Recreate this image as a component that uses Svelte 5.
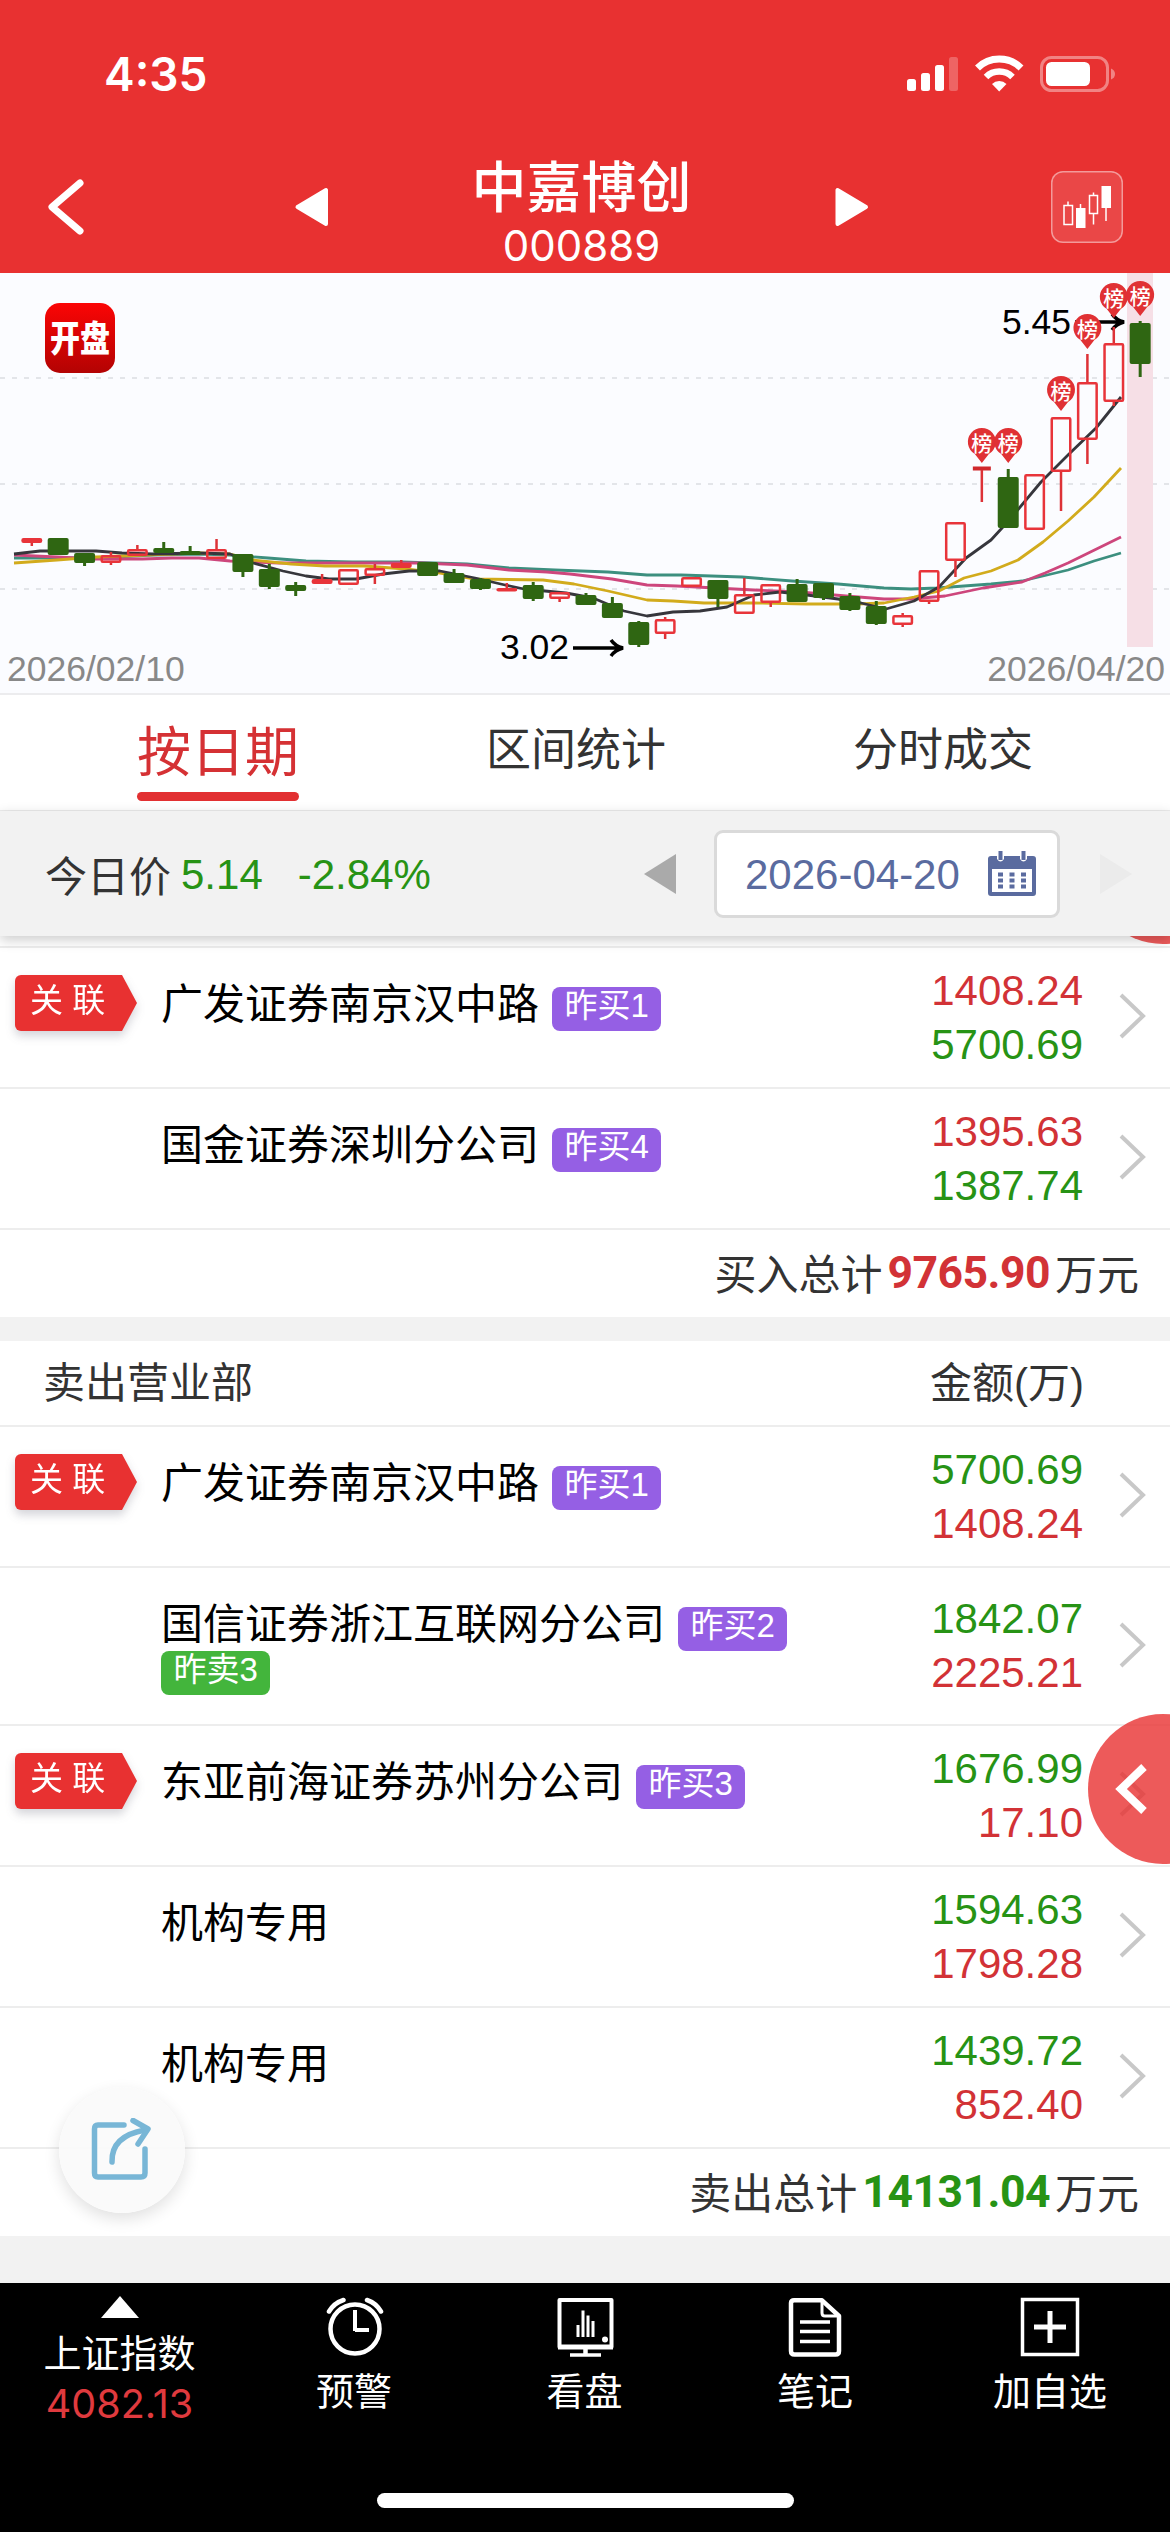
<script lang="ts">
  type Kind = 'up' | 'down' | 'flat'
  type Candle = [Kind, number, number, number, number] // kind, high, body top, body bottom, low

  interface Seat {
    name: string
    linked?: boolean
    tags: { text: string; sell?: boolean }[]
    amounts: { value: string; dir: 'up' | 'down' }[]
  }

  const STEP = 26.39
  const FIRST_X = 31.8
  const BODY_W = 21

  const candles: Candle[] = [
    ['up', 265, 265, 270, 273], ['down', 265, 265, 282, 282], ['down', 280, 280, 290, 293],
    ['up', 279, 282, 290, 292], ['up', 272, 276, 283, 283], ['down', 269, 275, 280, 280],
    ['down', 273, 278, 282, 282], ['up', 266, 276, 286, 286], ['down', 281, 281, 299, 304],
    ['down', 291, 296, 314, 316], ['down', 309, 312, 318, 323], ['up', 301, 306, 311, 311],
    ['up', 296, 296, 312, 312], ['up', 291, 295, 303, 311], ['up', 287, 290, 295, 295],
    ['down', 289, 289, 303, 303], ['down', 296, 300, 310, 310], ['down', 305, 306, 316, 317],
    ['up', 310, 315, 318, 318], ['down', 309, 312, 326, 328], ['up', 319, 319, 326, 329],
    ['down', 320, 322, 332, 332], ['down', 324, 330, 345, 345], ['down', 348, 349, 372, 374],
    ['up', 344, 346, 361, 366], ['up', 304, 304, 314, 314], ['down', 307, 307, 326, 334],
    ['up', 305, 321, 341, 341], ['up', 311, 311, 330, 334], ['down', 306, 311, 329, 329],
    ['down', 310, 310, 325, 327], ['down', 320, 323, 337, 338], ['down', 328, 333, 351, 352],
    ['up', 340, 342, 352, 354], ['up', 297, 297, 329, 331], ['up', 249, 249, 288, 304],
    ['flat', 194, 194, 197, 229], ['down', 196, 204, 255, 255], ['up', 201, 201, 257, 257],
    ['up', 144, 144, 199, 238], ['up', 81, 109, 167, 191], ['up', 54, 70, 129, 133],
    ['down', 48, 50, 91, 104],
  ]

  const averages = [
    { color: '#3c8f7f', points: '14,285 96,285 153,282 199,281 230,282 268,285 306,288 352,289 402,289 467,291 509,295 555,297 608,299 647,302 681,302 742,304 792,308 838,311 884,315 911,316 937,315 991,311 1022,308 1068,297 1094,288 1121,280' },
    { color: '#cd467c', points: '14,282 57,284 96,286 142,286 172,285 199,285 230,288 279,290 329,290 421,290 467,292 509,297 547,299 570,301 612,306 647,312 677,313 754,317 800,319 846,323 884,326 911,326 945,323 983,315 1022,309 1045,300 1068,290 1121,264' },
    { color: '#d2ab1c', points: '14,290 57,287 96,284 145,282 199,280 230,281 253,287 291,291 325,293 364,293 406,296 440,300 475,306 543,307 574,311 608,318 647,327 673,328 704,330 754,330 807,331 857,331 884,330 914,324 939,318 964,305 991,298 1018,287 1043,269 1068,248 1094,224 1121,195' },
    { color: '#36363c', points: '14,281 40,278 96,278 122,280 153,281 199,280 230,281 253,290 283,298 306,303 329,306 356,306 383,301 409,298 440,298 475,305 505,312 524,316 566,320 593,325 624,338 647,343 673,339 700,338 727,334 754,322 780,319 807,322 838,326 861,330 886,336 914,328 939,314 966,285 991,267 1002,255 1016,239 1041,209 1068,182 1096,155 1121,124' },
  ]

  // candle index + top of the pin
  const pins = [[36, 156], [37, 156], [39, 104], [40, 42], [41, 11], [42, 9]]

  const buySeats: Seat[] = [
    { name: '广发证券南京汉中路', linked: true, tags: [{ text: '昨买1' }],
      amounts: [{ value: '1408.24', dir: 'up' }, { value: '5700.69', dir: 'down' }] },
    { name: '国金证券深圳分公司', tags: [{ text: '昨买4' }],
      amounts: [{ value: '1395.63', dir: 'up' }, { value: '1387.74', dir: 'down' }] },
  ]

  const sellSeats: Seat[] = [
    { name: '广发证券南京汉中路', linked: true, tags: [{ text: '昨买1' }],
      amounts: [{ value: '5700.69', dir: 'down' }, { value: '1408.24', dir: 'up' }] },
    { name: '国信证券浙江互联网分公司', tags: [{ text: '昨买2' }, { text: '昨卖3', sell: true }],
      amounts: [{ value: '1842.07', dir: 'down' }, { value: '2225.21', dir: 'up' }] },
    { name: '东亚前海证券苏州分公司', linked: true, tags: [{ text: '昨买3' }],
      amounts: [{ value: '1676.99', dir: 'down' }, { value: '17.10', dir: 'up' }] },
    { name: '机构专用', tags: [],
      amounts: [{ value: '1594.63', dir: 'down' }, { value: '1798.28', dir: 'up' }] },
    { name: '机构专用', tags: [],
      amounts: [{ value: '1439.72', dir: 'down' }, { value: '852.40', dir: 'up' }] },
  ]

  const tabs = ['按日期', '区间统计', '分时成交']
  let activeTab = $state(0)

  const cx = (i: number) => FIRST_X + STEP * i
</script>

{#snippet seatRow(seat: Seat)}
  <div class="seat">
    <div class="seat-flag">
      {#if seat.linked}<div class="linked"><span>关 联</span></div>{/if}
    </div>
    <div class="seat-name">
      <span class="name">{seat.name}</span>
      {#each seat.tags as tag}
        <span class="tag" class:sell={tag.sell}>{tag.text}</span>
      {/each}
    </div>
    <div class="amounts">
      {#each seat.amounts as a}<span class={a.dir}>{a.value}</span>{/each}
    </div>
    <svg class="more" width="30" height="48" viewBox="0 0 30 48">
      <path d="M3 3 L25 24 L3 45" fill="none" stroke="#c8c8c8" stroke-width="4" />
    </svg>
  </div>
{/snippet}

<div class="screen">
  <header>
    <div class="statusbar">
      <span class="time">4:35</span>
      <svg width="210" height="40" viewBox="906 54 210 40" fill="#fff">
        <rect x="907" y="79" width="9" height="12" rx="2.5" />
        <rect x="921" y="73" width="9" height="18" rx="2.5" />
        <rect x="935" y="65" width="9" height="26" rx="2.5" />
        <rect x="949" y="57" width="9" height="34" rx="2.5" opacity=".25" />
        <path d="M977.500 68 A31 31 0 0 1 1021 68" fill="none" stroke="#fff" stroke-width="7" />
        <path d="M986 77 A19 19 0 0 1 1012.500 77" fill="none" stroke="#fff" stroke-width="6.500" />
        <path d="M999.200 91.500 L992 84 A10.500 10.500 0 0 1 1006.500 84 Z" />
        <rect x="1041.500" y="57.500" width="66" height="33" rx="10" fill="none" stroke="#fff" stroke-width="3" opacity=".4" />
        <rect x="1046" y="62" width="44" height="24" rx="5.500" />
        <path d="M1111 68.500 Q1115 70 1115 74 Q1115 78 1111 79.500 Z" opacity=".4" />
      </svg>
    </div>
    <div class="nav">
      <svg class="back" width="46" height="62" viewBox="0 0 46 62">
        <path d="M36 7 L8 31 L36 55" fill="none" stroke="#fff" stroke-width="7" stroke-linecap="round" stroke-linejoin="round" />
      </svg>
      <svg width="34" height="40" viewBox="0 0 34 40"><path d="M32 3 V37 L3.500 20 Z" fill="#fff" stroke="#fff" stroke-width="4" stroke-linejoin="round" /></svg>
      <div class="title">
        <h1>中嘉博创</h1>
        <span>000889</span>
      </div>
      <svg width="34" height="40" viewBox="0 0 34 40"><path d="M2.500 3 V37 L31 20 Z" fill="#fff" stroke="#fff" stroke-width="4" stroke-linejoin="round" /></svg>
      <button class="kline" aria-label="K线">
        <svg width="72" height="72" viewBox="0 0 72 72">
          <g fill="none" stroke="#fff" stroke-width="1.500">
            <rect x="13" y="34.500" width="8.500" height="19" />
            <path d="M17 30.500 V34 M29.500 33 V37" />
            <rect x="38.500" y="24.500" width="8" height="18" />
            <path d="M42.500 21.500 V24 M42.500 43 V53.500 M55 36 V50" />
          </g>
          <rect x="25" y="37" width="9.500" height="20" fill="#fff" />
          <rect x="50.500" y="15" width="9.500" height="22" fill="#fff" />
        </svg>
      </button>
    </div>
  </header>

  <svg class="chart" width="1170" height="422" viewBox="0 0 1170 422">
    <defs>
      <linearGradient id="logo" x1="0" y1="0" x2="0" y2="1">
        <stop offset="0" stop-color="#fb0505" />
        <stop offset="1" stop-color="#b30303" />
      </linearGradient>
    </defs>
    {#each [105, 211, 316] as y}
      <line x1="0" x2="1170" y1={y} y2={y} stroke="#dcdde2" stroke-width="1.500" stroke-dasharray="5 7" />
    {/each}
    <line x1="0" x2="1170" y1="421" y2="421" stroke="#ececee" stroke-width="2" />
    <rect x="1127" y="0" width="26" height="374" fill="#f6dfe6" />

    <rect x="45" y="30" width="70" height="70" rx="15" fill="url(#logo)" />
    <text class="logo-text" transform="translate(80 78.500) scale(1 1.22)" text-anchor="middle">开盘</text>

    {#each averages as ma}
      <polyline points={ma.points} fill="none" stroke={ma.color} stroke-width="2.800" stroke-linejoin="round" />
    {/each}

    <g stroke="#000" stroke-width="3.500" fill="none">
      <path d="M1075 49 H1122 M1112 41 Q1116 47 1124 49 Q1116 51 1112 57" />
      <path d="M573 375 H621 M611 367 Q615 373 623 375 Q615 377 611 383" />
    </g>

    {#each candles as [kind, high, top, bottom, low], i}
      {@const x = cx(i)}
      {#if kind === 'down'}
        <line x1={x} x2={x} y1={high} y2={low} stroke="#2f6612" stroke-width="3" />
        <rect x={x - BODY_W / 2} y={top} width={BODY_W} height={bottom - top} rx="2" fill="#2f6612" />
      {:else if kind === 'flat'}
        <rect x={x - 9} y={top - 0.5} width="18" height="4" fill="#d0282c" />
        <line x1={x} x2={x} y1={bottom} y2={low} stroke="#dd3237" stroke-width="2.500" />
      {:else}
        <path d="M{x} {high} V{top} M{x} {bottom} V{low}" stroke="#dd3237" stroke-width="2.500" />
        <rect
          x={x - BODY_W / 2 + 1.25} y={top + 1.25}
          width={BODY_W - 2.5} height={Math.max(bottom - top - 2.5, 1)}
          rx="1" fill={bottom - top < 6 ? '#e8343a' : 'none'} stroke="#e8343a" stroke-width="2.500"
        />
      {/if}
    {/each}

    {#each pins as [i, top]}
      <g transform="translate({cx(i)} {top})">
        <path d="M0 34 L-7 25 A14 14 0 1 1 7 25 Z" fill="#e03134" />
        <text class="pin-text" x="0" y="21.500" text-anchor="middle">榜</text>
      </g>
    {/each}

    <text class="price" x="1002" y="61">5.45</text>
    <text class="price" x="500" y="386">3.02</text>
    <text class="date" x="7" y="408">2026/02/10</text>
    <text class="date" x="1165" y="408" text-anchor="end">2026/04/20</text>
  </svg>

  <nav class="tabs">
    {#each tabs as tab, i}
      <button class:active={i === activeTab} onclick={() => (activeTab = i)}>{tab}</button>
    {/each}
  </nav>

  <div class="datebar">
    <span class="label">今日价</span>
    <span class="down">5.14</span>
    <span class="down change">-2.84%</span>
    <svg class="prev" width="32" height="40" viewBox="0 0 32 40"><path d="M32 0 V40 L0 20 Z" fill="#aaa" /></svg>
    <button class="datepick">
      <span>2026-04-20</span>
      <svg width="50" height="48" viewBox="0 0 50 48">
        <path d="M4 6 H10 V9 Q13.500 14 17 9 V6 H33 V9 Q36.500 14 40 9 V6 H46 Q49 6 49 9 V43 Q49 46 46 46 H4 Q1 46 1 43 V9 Q1 6 4 6 Z" fill="#5a6b9f" />
        <path d="M13.500 1 V10 M36.500 1 V10" stroke="#5a6b9f" stroke-width="4" />
        <rect x="5" y="19" width="40" height="23" fill="#fff" />
        <path d="M11 24.500 H39 M11 30.500 H39 M11 36.500 H39" stroke="#5a6b9f" stroke-width="4" stroke-dasharray="5 6.500" />
      </svg>
    </button>
    <svg width="32" height="40" viewBox="0 0 32 40"><path d="M0 0 V40 L32 20 Z" fill="#ebebeb" /></svg>
  </div>

  <main>
    <section class="seats first">
      {#each buySeats as seat}{@render seatRow(seat)}{/each}
      <div class="total">
        <span>买入总计</span><b class="up">9765.90</b><span>万元</span>
      </div>
    </section>

    <section class="seats">
      <div class="seats-head"><span>卖出营业部</span><span>金额(万)</span></div>
      {#each sellSeats as seat}{@render seatRow(seat)}{/each}
      <div class="total">
        <span>卖出总计</span><b class="down">14131.04</b><span>万元</span>
      </div>
    </section>
  </main>

  <div class="drawer hidden-one"></div>
  <button class="drawer" aria-label="展开">
    <svg width="34" height="50" viewBox="0 0 34 50">
      <path d="M29 3 L6 25 L29 47" fill="none" stroke="#fff" stroke-width="8" />
    </svg>
  </button>

  <button class="share" aria-label="分享">
    <svg width="62" height="64" viewBox="0 0 62 64" fill="none" stroke="#78b6d6" stroke-width="5.500" stroke-linecap="round">
      <path d="M33 7 H7 Q3.500 7 3.500 11 V55 Q3.500 59 7 59 H50 Q54 59 54 55 V31" />
      <path d="M21 44 Q20 18 54 12" />
      <path d="M42 2.500 L57 11 L47 26" stroke-linejoin="round" />
    </svg>
  </button>

  <footer>
    <div class="menu">
      <div class="item index">
        <svg width="38" height="22" viewBox="0 0 38 22"><path d="M19 0 L38 22 H0 Z" fill="#fff" /></svg>
        <span>上证指数</span>
        <span class="points">4082.13</span>
      </div>
      <div class="item">
        <svg width="60" height="60" viewBox="0 0 60 60" fill="none" stroke="#fff" stroke-width="4.500">
          <circle cx="31" cy="32" r="24.500" />
          <path d="M31 13 V34 M31 33 H45" stroke-width="4" />
          <path d="M5 14.500 Q10 6 19.500 3 M57 14.500 Q52 6 43 3" stroke-linecap="round" />
        </svg>
        <span>预警</span>
      </div>
      <div class="item">
        <svg width="60" height="60" viewBox="0 0 60 60" fill="none" stroke="#fff" stroke-width="4">
          <path d="M4.500 3 H56.500 V50 H4.500 Z" stroke-linejoin="round" />
          <path d="M3 50 H58" stroke-width="5" />
          <path d="M30.500 51 V58" stroke-width="4.500" />
          <path d="M15 58 H46" stroke-width="3.500" />
          <path d="M23 40 V28 M28 40 V13.500 M33 40 V18.500 M38 40 V24" stroke-width="3" />
          <circle cx="50" cy="42.500" r="3" fill="#fff" stroke="none" />
        </svg>
        <span>看盘</span>
      </div>
      <div class="item">
        <svg width="60" height="60" viewBox="0 0 60 60" fill="none" stroke="#fff" stroke-width="4.500" stroke-linejoin="round">
          <path d="M9 3.300 H37 L54 19 V54 Q54 57.500 50.500 57.500 H9.500 Q6 57.500 6 54 V6 Q6 3.300 9 3.300 Z" />
          <path d="M37 4 V16 Q37 19 40 19 H54" stroke-width="3" />
          <path d="M15 25 H45 M15 34.500 H45 M15 44.500 H45" stroke-width="3.500" />
        </svg>
        <span>笔记</span>
      </div>
      <div class="item">
        <svg width="60" height="60" viewBox="0 0 60 60" fill="none" stroke="#fff" stroke-width="3.500">
          <rect x="2.500" y="2.500" width="55" height="55" />
          <path d="M30 14 V46 M14 30 H46" stroke-width="5" />
        </svg>
        <span>加自选</span>
      </div>
    </div>
    <div class="home"></div>
  </footer>
</div>

<style>
  :global(body) {
    background: #f2f2f2;
  }
  .screen {
    position: relative;
    display: flex;
    flex-direction: column;
    width: 1170px;
    height: 2532px;
    overflow: hidden;
    background: #f2f2f2;
    color: #333;
    font-family: "Liberation Sans", "Noto Sans CJK SC", sans-serif;
    font-size: 42px;
  }
  svg { display: block; flex: none; }
  button {
    border: none;
    padding: 0;
    background: none;
    font: inherit;
    color: inherit;
  }
  .up   { color: #d23236; }
  .down { color: #279315; }

  /* header */
  header {
    flex: none;
    height: 273px;
    background: #e83131;
    color: #fff;
  }
  .statusbar {
    display: flex;
    justify-content: space-between;
    align-items: center;
    height: 148px;
    padding: 0 54px 0 104px;
    box-sizing: border-box;
  }
  .time {
    font-family: Inter, sans-serif;
    font-weight: 600;
    font-size: 46px;
    line-height: 48px;
  }
  .nav {
    display: grid;
    grid-template-columns: 250px 34px 507px 34px 182px 72px;
    grid-template-rows: 118px;
    align-items: center;
    padding-left: 44px;
  }
  .title {
    display: flex;
    flex-direction: column;
    align-items: center;
    padding-top: 7px;
  }
  .title h1 {
    margin: 0;
    font-size: 55px;
    font-weight: 500;
    line-height: 70px;
  }
  .title span {
    font-family: Inter, sans-serif;
    font-size: 42px;
    line-height: 45px;
  }
  .kline {
    grid-column: 6;
    width: 72px;
    height: 72px;
    border-radius: 12px;
    background: rgba(255, 255, 255, 0.11);
    box-shadow: inset 0 0 0 1.5px rgba(255, 255, 255, 0.45);
  }

  /* chart */
  .chart { background: #fbfcff; }
  .logo-text { font-size: 30px; font-weight: 900; fill: #fff; }
  .pin-text  { font-size: 21px; font-weight: 500; fill: #fff; }
  .price     { font-size: 35.5px; fill: #000; }
  .date      { font-size: 35.5px; fill: #888; }

  /* tabs */
  .tabs {
    flex: none;
    z-index: 2;
    display: flex;
    justify-content: space-between;
    align-items: flex-start;
    height: 116px;
    padding: 0 137px;
    box-sizing: border-box;
    background: #fff;
    border-bottom: 1px solid #ececec;
  }
  .tabs button {
    height: 106px;
    font-size: 45px;
    line-height: 112px;
  }
  .tabs .active {
    display: flex;
    flex-direction: column;
    box-sizing: border-box;
    padding-top: 10px;
    font-size: 54px;
    line-height: 97px;
    color: #d53134;
  }
  .tabs .active::after {
    content: '';
    flex: none;
    height: 9px;
    margin-top: -10px;
    border-radius: 5px;
    background: #e23032;
  }

  /* date bar */
  .datebar {
    flex: none;
    z-index: 2;
    display: flex;
    align-items: center;
    height: 125px;
    padding-left: 45px;
    box-sizing: border-box;
    background: #f2f2f2;
    box-shadow: 0 4px 12px rgba(0, 0, 0, 0.2);
  }
  .datebar span { padding-top: 2px; }
  .datebar .label {
    margin-right: 10px;
    padding-top: 0;
  }
  .change { margin-left: 35px; }
  .prev   { margin-left: auto; }
  .datepick {
    display: flex;
    align-items: center;
    justify-content: space-between;
    width: 346px;
    height: 88px;
    margin: 0 40px 0 38px;
    padding: 0 20px 0 28px;
    box-sizing: border-box;
    border: 3px solid #dadada;
    border-radius: 9px;
    background: #fff;
    color: #5a6b9f;
  }
  .datebar > svg:last-child { margin-right: 38px; }

  /* seats */
  .seats {
    margin-bottom: 24px;
    background: #fff;
  }
  .first {
    margin-top: 10px;
    border-top: 2px solid #ededed;
    box-shadow: 0 -10px #fff;
  }
  .seats-head {
    display: flex;
    justify-content: space-between;
    align-items: center;
    height: 86px;
    padding: 0 86px 7px 43px;
    box-sizing: border-box;
    border-bottom: 2px solid #ededed;
  }
  .seat {
    display: flex;
    min-height: 141px;
    box-sizing: border-box;
    border-bottom: 2px solid #ededed;
  }
  .seat-flag {
    flex: none;
    width: 161px;
    padding: 27px 0 0 15px;
    box-sizing: border-box;
    filter: drop-shadow(0 5px 5px rgba(60, 60, 80, 0.22));
  }
  .linked {
    width: 122px;
    height: 56px;
    padding-left: 15px;
    box-sizing: border-box;
    border-radius: 6px 0 0 6px;
    background: #e83131;
    clip-path: polygon(0 0, 107px 0, 100% 50%, 107px 100%, 0 100%);
    color: #fff;
    font-size: 33px;
    line-height: 52px;
    white-space: pre;
  }
  .seat-name {
    flex: none;
    display: flex;
    flex-wrap: wrap;
    align-content: flex-start;
    align-items: flex-start;
    column-gap: 13px;
    width: 680px;
    padding: 39px 0 29px;
    color: #000;
  }
  .name {
    margin-top: -4px;
    line-height: 44px;
  }
  .tag {
    height: 44px;
    padding: 0 12.5px;
    border-radius: 8px;
    background: #955fe4;
    color: #fff;
    font-size: 33px;
    line-height: 37px;
  }
  .sell { background: #43b53c; }
  .amounts {
    display: flex;
    flex-direction: column;
    justify-content: center;
    align-items: flex-end;
    width: 242px;
    line-height: 54px;
  }
  .more {
    align-self: center;
    margin: 0 0 3px 35px;
  }
  .total {
    display: flex;
    justify-content: flex-end;
    align-items: center;
    height: 87px;
    padding: 0 31px 4px 0;
    box-sizing: border-box;
  }
  .total b {
    margin: 3px 5px 0;
    font-family: Roboto, sans-serif;
    font-size: 44.5px;
    line-height: 50px;
    letter-spacing: -0.5px;
  }

  /* floating controls */
  .drawer {
    position: absolute;
    z-index: 1;
    left: 1088px;
    top: 1714px;
    display: flex;
    align-items: center;
    width: 150px;
    height: 150px;
    padding-left: 27px;
    box-sizing: border-box;
    border-radius: 50%;
    background: rgba(232, 49, 49, 0.8);
  }
  .hidden-one { top: 794px; }
  .share {
    position: absolute;
    left: 59px;
    top: 2087px;
    display: grid;
    place-items: center;
    width: 126px;
    height: 126px;
    border-radius: 50%;
    background: rgba(250, 250, 250, 0.95);
    box-shadow: 0 6px 16px rgba(0, 0, 0, 0.12);
  }

  /* bottom bar */
  footer {
    display: flex;
    flex-direction: column;
    justify-content: space-between;
    align-items: center;
    height: 249px;
    margin-top: auto;
    padding-bottom: 24px;
    box-sizing: border-box;
    background: #000;
    color: #fff;
    font-size: 38px;
  }
  .menu {
    display: grid;
    grid-template-columns: 239px 230px 231px 230px 240px;
  }
  .item {
    display: flex;
    flex-direction: column;
    align-items: center;
    padding-top: 14px;
    line-height: 50px;
  }
  .item > svg + span { margin-top: 10px; }
  .index { padding-top: 13px; }
  .index > svg + span { margin-top: 11px; }
  .points {
    color: #e03a3e;
    font-family: Inter, sans-serif;
    font-size: 39.5px;
  }
  .home {
    width: 417px;
    height: 15px;
    border-radius: 8px;
    background: #fff;
  }
</style>
